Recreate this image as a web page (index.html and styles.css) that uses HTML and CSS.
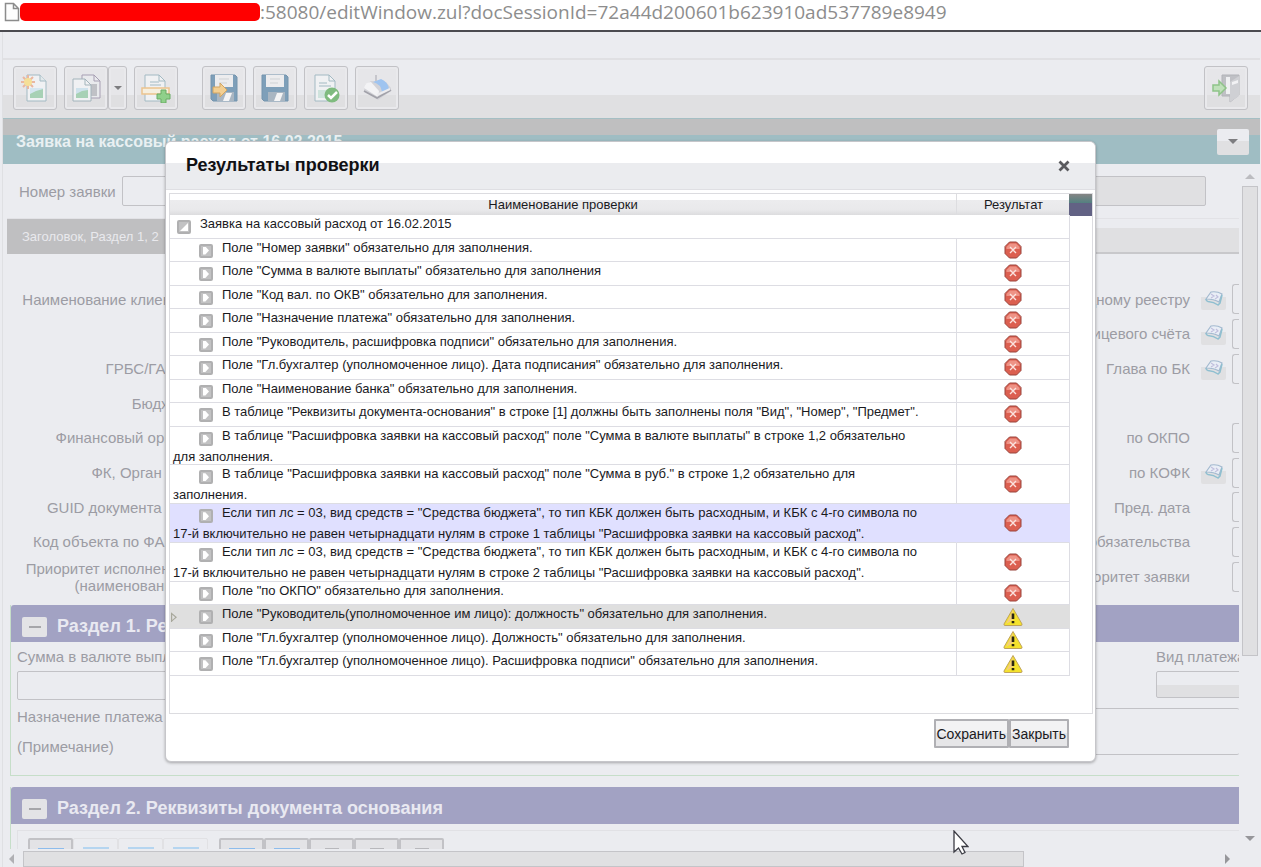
FILE: index.html
```html
<!DOCTYPE html>
<html lang="ru">
<head>
  <meta charset="UTF-8" />
  <meta name="viewport" content="width=device-width, initial-scale=1" />
  <title>Результаты проверки</title>
  <link rel="stylesheet" href="styles.css">
</head>
<body>
  <svg class="defs" aria-hidden="true">
    <symbol id="error" viewBox="0 0 18 18">
      <path d="M5.500 1h7L17 5.500v7L12.500 17h-7L1 12.500v-7z" fill="#dc5f50" stroke="#98453c"/>
      <path d="M6 2.500h6L15.500 6v2h-13V6z" fill="#ee9386"/>
      <path d="M6 6l6 6M12 6l-6 6" stroke="#fbe3df" stroke-width="1.400"/>
    </symbol>
    <symbol id="warn" viewBox="0 0 20 20">
      <path d="M10 1.500L19 17q.3 1.500-1 1.500H2Q.700 18.500 1 17z" fill="#f4e22c" stroke="#c0a35c"/>
      <path d="M10 3L3 17l7-4z" fill="#f3ce7c"/>
      <path d="M10 6.500v5.500M10 14v2.200" stroke="#2b2611" stroke-width="2.600"/>
    </symbol>
    <symbol id="book" viewBox="0 0 20 16">
      <path d="M2 9L7 2q6-1 11 2l-3 8q-5-3-13-3z" fill="#e9eef6" stroke="#a3b9cf" stroke-width="1.200"/>
      <path d="M2 9q0 2 2 2.500 6 .5 10 3.500l2-2 2-8" fill="none" stroke="#8fbfd0" stroke-width="1.500"/>
      <path d="M7 4l3 2-3 2M12 5l2 2-3 2" fill="none" stroke="#c0bfdd" stroke-width="1.200"/>
    </symbol>
    <symbol id="floppy" viewBox="0 0 30 30">
      <path d="M2 2h24l2 2v24H4l-2-2z" fill="#7e9fb9" stroke="#7594ad"/>
      <path d="M6 2h18v12H6z" fill="#ececee"/>
      <path d="M10 6h10M10 10h8" stroke="#cfd2d5"/>
      <path d="M8 19h17v9H8z" fill="#a9b6c2"/>
      <path d="M17 20h6l-3 8h-6z" fill="#f4f4f5"/>
    </symbol>
  </svg>

  <div class="address">
    <svg width="16" height="20" viewBox="0 0 16 20"><path d="M1.500 1.500h8l5 5v12h-13zM9.500 1.500v5h5" fill="#fdfdfd" stroke="#8c8c8c" stroke-width="1.500"/></svg>
    <span class="redacted"></span>
    <span>:58080/editWindow.zul?docSessionId=72a44d200601b623910ad537789e8949</span>
  </div>

  <div class="app">
    <div class="strip"></div>

    <div class="toolbar">
      <button class="tool" aria-label="Новый">
        <svg width="30" height="30" viewBox="0 0 30 30">
          <path d="M7 2h13l6 6v20H7z" fill="#f0f1f3" stroke="#a3bac3"/><path d="M20 2v6h6" fill="#e2e8eb" stroke="#a3bac3"/>
          <path d="M10 15h13v10H10z" fill="#d5e6f0"/><path d="M10 21l6-3 7-2v9H10z" fill="#a7d1b5"/>
          <path d="M8 2v14M1 9h14M3 4l10 10M13 4L3 14" stroke="#eab7a0" stroke-width="2"/><circle cx="8" cy="9" r="4" fill="#f5df98"/>
        </svg>
      </button>
      <div class="split">
        <button class="tool" aria-label="Копировать">
          <svg width="30" height="30" viewBox="0 0 30 30">
            <path d="M11 2h12l6 6v17H11z" fill="#e9eaed" stroke="#a79fb3"/><path d="M23 2v6h6" fill="none" stroke="#a79fb3"/><path d="M17 11h9v12h-9z" fill="#c0c1c6"/>
            <path d="M2 6h12l6 6v16H2z" fill="#f0f1f3" stroke="#a3b4bb"/><path d="M14 6v6h6" fill="none" stroke="#a3b4bb"/>
            <path d="M5 15h12v10H5z" fill="#cfe2ec"/><path d="M5 21l6-3 6-1v8H5z" fill="#a7d1b5"/>
          </svg>
        </button>
        <button class="tool tool-arrow" aria-label="Ещё"><span class="caret"></span></button>
      </div>
      <button class="tool" aria-label="Добавить строку">
        <svg width="30" height="30" viewBox="0 0 30 30">
          <path d="M4 2h14l6 6v20H4z" fill="#f0f1f3" stroke="#a3bac3"/><path d="M18 2v6h6M9 9h9M9 12h11" fill="none" stroke="#a3bac3"/>
          <path d="M1 15h27v6H1z" fill="#f6efdf" stroke="#ebc48f" stroke-width="1.500"/>
          <path d="M20 17h5v4h4v5h-4v4h-5v-4h-4v-5h4z" fill="#8fd08a" stroke="#68ac64"/>
        </svg>
      </button>
      <button class="tool tool-group" aria-label="Сохранить и выйти">
        <svg width="30" height="30"><use href="#floppy"/><path d="M4 14h7v-4l7 7-7 7v-4H4z" fill="#f3cf92" stroke="#d3a560"/></svg>
      </button>
      <button class="tool" aria-label="Сохранить документ"><svg width="30" height="30"><use href="#floppy"/></svg></button>
      <button class="tool" aria-label="Проверить">
        <svg width="30" height="30" viewBox="0 0 30 30">
          <path d="M4 2h14l6 6v20H4z" fill="#f0f1f3" stroke="#a3bac3"/><path d="M18 2v6h6M8 10h8M8 13h12" fill="none" stroke="#a3bac3"/>
          <path d="M7 17h14v8H7z" fill="#cfe3dd"/><circle cx="21" cy="22" r="7.500" fill="#7fbb7f"/><path d="M17 22l3 3 6-6" fill="none" stroke="#fff" stroke-width="2.500"/>
        </svg>
      </button>
      <button class="tool" aria-label="Печать">
        <svg width="30" height="30" viewBox="0 0 30 30">
          <path d="M2 18l1-6 6-4 15 1 5 6v3l-13 9z" fill="#d3d3d8"/>
          <path d="M2 15q1-6 7-6l8 9-1 6z" fill="#f3f3f5"/>
          <path d="M11 9l8-3q7 3 8 10l-7 3q-1-8-9-10z" fill="#9fc4f0"/>
          <path d="M14 2v6" stroke="#c6c6cc" stroke-width="2"/>
          <path d="M2 18l13 7 14-8" fill="none" stroke="#a2a2aa" stroke-width="1.800"/><path d="M15 22l13-6" stroke="#ececef" stroke-width="2"/>
        </svg>
      </button>
      <button class="tool tool-exit" aria-label="Выход">
        <svg width="30" height="30" viewBox="0 0 30 30">
          <path d="M11 2h17v20l-9 7v-6h-8z" fill="#bfc0c5" stroke="#b2b3b8"/><path d="M19 9l9-6v20l-9 6z" fill="#cfd0d4"/><path d="M15 4h4v17h-4z" fill="#eff0f2"/><path d="M21 9l6-2v3l-6 2z" fill="#f2f2f4"/>
          <path d="M2 12h6V8l7 7-7 7v-4H2z" fill="#bfe0ba" stroke="#8fc389" stroke-width="1.500"/>
        </svg>
      </button>
    </div>

    <div class="titlebar">
      <h1>Заявка на кассовый расход от 16.02.2015</h1>
      <button aria-label="Действия"><span class="caret"></span></button>
    </div>

    <div class="workspace">
      <div class="pane">
        <div class="number-row">
          <label for="number">Номер заявки</label>
          <input id="number" type="text">
          <input class="readonly" type="text" aria-label="Состояние" disabled>
        </div>
        <div class="tabs"><button class="tab">Заголовок, Раздел 1, 2</button><div class="tab-rest"></div></div>

        <div class="columns">
          <div class="labels">
            <span>Наименование клиента</span>
            <span></span>
            <span>ГРБС/ГАДБ</span>
            <span>Бюджет</span>
            <span>Финансовый орган</span>
            <span>ФК, Орган ФК</span>
            <span>GUID документа ФК</span>
            <span>Код объекта по ФАИП</span>
            <span>Приоритет исполнения<br>(наименование)</span>
          </div>
          <div class="fields">
            <div class="field"><label for="f1">по Сводному реестру</label><button class="pick" aria-label="Выбрать"><svg width="20" height="16"><use href="#book"/></svg></button><input id="f1" type="text"></div>
            <div class="field"><label for="f2">Номер лицевого счёта</label><button class="pick" aria-label="Выбрать"><svg width="20" height="16"><use href="#book"/></svg></button><input id="f2" type="text"></div>
            <div class="field"><label for="f3">Глава по БК</label><button class="pick" aria-label="Выбрать"><svg width="20" height="16"><use href="#book"/></svg></button><input id="f3" type="text"></div>
            <div class="field"></div>
            <div class="field"><label for="f4">по ОКПО</label><i></i><input id="f4" type="text"></div>
            <div class="field"><label for="f5">по КОФК</label><button class="pick" aria-label="Выбрать"><svg width="20" height="16"><use href="#book"/></svg></button><input id="f5" type="text"></div>
            <div class="field"><label for="f6">Пред. дата</label><i></i><input id="f6" type="text"></div>
            <div class="field"><label for="f7">Номер обязательства</label><i></i><input id="f7" type="text"></div>
            <div class="field"><label for="f8">Приоритет заявки</label><i></i><input id="f8" type="text"></div>
          </div>
        </div>

        <div class="section">
          <div class="section-head"><button aria-label="Свернуть"></button><h2>Раздел 1. Реквизиты</h2></div>
          <div class="payment">
            <div class="amount"><label for="sum">Сумма в валюте выплаты</label><input id="sum" type="text"></div>
            <div class="kind"><label for="kind">Вид платежа</label><select id="kind"><option></option></select></div>
          </div>
          <div class="purpose">
            <label for="purpose">Назначение платежа<br>(Примечание)</label>
            <textarea id="purpose"></textarea>
          </div>
        </div>

        <div class="section">
          <div class="section-head"><button aria-label="Свернуть"></button><h2>Раздел 2. Реквизиты документа основания</h2></div>
          <div class="section-tools">
            <button aria-label="Добавить"></button><button class="faint" aria-label="Изменить"></button><button class="faint" aria-label="Копировать строку"></button><button class="faint" aria-label="Удалить"></button>
            <button class="next" aria-label="Импорт"></button><button aria-label="Экспорт"></button><button class="gray" aria-label="Поиск"></button><button class="gray" aria-label="Фильтр"></button><button class="gray" aria-label="Настройка"></button>
          </div>
        </div>
      </div>
      <div class="vscroll"><span class="up"></span><div class="vthumb"></div><span class="down"></span></div>
    </div>
    <div class="hscroll"><span class="left"></span><div class="hthumb"></div><span class="right"></span></div>
  </div>

  <div class="dialog" role="dialog" aria-labelledby="dialog-title">
    <div class="dialog-head">
      <h2 id="dialog-title">Результаты проверки</h2>
      <button aria-label="Закрыть окно"><svg width="12" height="12" viewBox="0 0 12 12"><path d="M1.500 1.500l9 9M10.500 1.500l-9 9" stroke="#5a5a5e" stroke-width="2.800"/></svg></button>
    </div>
    <div class="tree">
      <div class="corner"></div>
      <table>
        <thead><tr><th>Наименование проверки</th><th class="result">Результат</th></tr></thead>
        <tbody>
          <tr class="root"><td colspan="2"><i class="node open"></i>Заявка на кассовый расход от 16.02.2015</td></tr>
          <tr><td><i class="node"></i>Поле "Номер заявки" обязательно для заполнения.</td><td><svg class="error"><use href="#error"/></svg></td></tr>
          <tr><td><i class="node"></i>Поле "Сумма в валюте выплаты" обязательно для заполнения</td><td><svg class="error"><use href="#error"/></svg></td></tr>
          <tr><td><i class="node"></i>Поле "Код вал. по ОКВ" обязательно для заполнения.</td><td><svg class="error"><use href="#error"/></svg></td></tr>
          <tr><td><i class="node"></i>Поле "Назначение платежа" обязательно для заполнения.</td><td><svg class="error"><use href="#error"/></svg></td></tr>
          <tr><td><i class="node"></i>Поле "Руководитель, расшифровка подписи" обязательно для заполнения.</td><td><svg class="error"><use href="#error"/></svg></td></tr>
          <tr><td><i class="node"></i>Поле "Гл.бухгалтер (уполномоченное лицо). Дата подписания" обязательно для заполнения.</td><td><svg class="error"><use href="#error"/></svg></td></tr>
          <tr><td><i class="node"></i>Поле "Наименование банка" обязательно для заполнения.</td><td><svg class="error"><use href="#error"/></svg></td></tr>
          <tr><td><i class="node"></i>В таблице "Реквизиты документа-основания" в строке [1] должны быть заполнены поля "Вид", "Номер", "Предмет".</td><td><svg class="error"><use href="#error"/></svg></td></tr>
          <tr><td><i class="node"></i>В таблице "Расшифровка заявки на кассовый расход" поле "Сумма в валюте выплаты" в строке 1,2 обязательно<br>для заполнения.</td><td><svg class="error"><use href="#error"/></svg></td></tr>
          <tr><td><i class="node"></i>В таблице "Расшифровка заявки на кассовый расход" поле "Сумма в руб." в строке 1,2 обязательно для<br>заполнения.</td><td><svg class="error"><use href="#error"/></svg></td></tr>
          <tr class="selected"><td><i class="node"></i>Если тип лс = 03, вид средств = "Средства бюджета", то тип КБК должен быть расходным, и КБК с 4-го символа по<br>17-й включительно не равен четырнадцати нулям в строке 1 таблицы "Расшифровка заявки на кассовый расход".</td><td><svg class="error"><use href="#error"/></svg></td></tr>
          <tr><td><i class="node"></i>Если тип лс = 03, вид средств = "Средства бюджета", то тип КБК должен быть расходным, и КБК с 4-го символа по<br>17-й включительно не равен четырнадцати нулям в строке 2 таблицы "Расшифровка заявки на кассовый расход".</td><td><svg class="error"><use href="#error"/></svg></td></tr>
          <tr><td><i class="node"></i>Поле "по ОКПО" обязательно для заполнения.</td><td><svg class="error"><use href="#error"/></svg></td></tr>
          <tr class="hovered"><td><i class="node"></i>Поле "Руководитель(уполномоченное им лицо): должность" обязательно для заполнения.</td><td><svg class="warn"><use href="#warn"/></svg></td></tr>
          <tr><td><i class="node"></i>Поле "Гл.бухгалтер (уполномоченное лицо). Должность" обязательно для заполнения.</td><td><svg class="warn"><use href="#warn"/></svg></td></tr>
          <tr><td><i class="node"></i>Поле "Гл.бухгалтер (уполномоченное лицо). Расшифровка подписи" обязательно для заполнения.</td><td><svg class="warn"><use href="#warn"/></svg></td></tr>
        </tbody>
      </table>
    </div>
    <div class="dialog-foot"><button>Сохранить</button><button>Закрыть</button></div>
  </div>

  <svg class="cursor" width="16" height="25" viewBox="0 0 16 25"><path d="M1 1v21l4.500-4 3.500 6 3-1.500-3-6h6z" fill="#fff" stroke="#3c3c44" stroke-width="1.300"/></svg>
</body>
</html>
```
FILE: styles.css
```css
* {
  box-sizing: border-box;
}

body {
  margin: 0;
  height: 100vh;
  display: flex;
  flex-direction: column;
  overflow: hidden;
  position: relative;
  background: #ebecf0;
  font-family: "Liberation Sans", Arial, sans-serif;
  font-size: 15px;
  color: #9c9ca4;
}

button, input, select, textarea {
  font: inherit;
  color: inherit;
  margin: 0;
  padding: 0;
  border: 1px solid #c2c2c6;
  border-radius: 2px;
  background: transparent;
}

h1, h2 {
  margin: 0;
}

.defs {
  position: absolute;
  width: 0;
  height: 0;
}

/* address line */
.address {
  flex: none;
  display: flex;
  align-items: center;
  height: 32px;
  padding: 0 4px 6px;
  background: #fff;
  border-bottom: 2px solid #4b4b50;
  font-family: "Open Sans", sans-serif;
  font-size: 19px;
  color: #8d8d8d;
  white-space: nowrap;
}

.redacted {
  width: 240px;
  height: 18px;
  border-radius: 5px;
  background: #f00;
}

.app {
  flex: 1;
  min-height: 0;
  display: flex;
  flex-direction: column;
  margin: 0 1px 0 2px;
  border-left: 1px solid #dfe0e3;
}

.strip {
  flex: none;
  height: 28px;
  border-bottom: 2px solid #e0e0e3;
}

.toolbar {
  flex: none;
  display: flex;
  align-items: flex-start;
  gap: 7px;
  height: 58px;
  padding: 6px 12px 0 10px;
  background: linear-gradient(#ebecf0 35px, #e0e0e2 35px);
}

.tool {
  width: 44px;
  height: 44px;
  display: flex;
  align-items: center;
  justify-content: center;
  border-radius: 3px;
  background: linear-gradient(#e6e6e9 28px, #dfdfe1 28px);
  box-shadow: inset 0 0 0 2px #e9e9ec;
}

.split {
  display: flex;
}

.tool-arrow {
  width: 19px;
}

.tool-group {
  margin-left: 17px;
}

.tool-exit {
  margin-left: auto;
}

.caret {
  border: 4px solid transparent;
  border-top: 4px solid #7d7d80;
  border-bottom: 0;
}

.titlebar {
  flex: none;
  display: flex;
  align-items: center;
  justify-content: space-between;
  height: 46px;
  padding: 0 11px 0 13px;
  border-top: 1px solid #a5bfc4;
  background: linear-gradient(#bfbfc0 16px, #9fbdc3 16px);
}

.titlebar h1 {
  font-size: 16px;
  color: #e9f0f2;
}

.titlebar button {
  width: 32px;
  height: 26px;
  display: flex;
  align-items: center;
  justify-content: center;
  border: 0;
  background: linear-gradient(#ebecf0 12px, #e0e0e2 12px);
}

.titlebar .caret {
  border-width: 5px;
  border-bottom: 0;
}

.workspace {
  flex: 1;
  min-height: 0;
  display: flex;
}

.pane {
  flex: 1;
  min-width: 0;
  overflow: hidden;
}

.number-row {
  display: flex;
  align-items: center;
  gap: 6px;
  height: 54px;
  padding: 0 33px 0 16px;
}

.number-row input {
  width: 200px;
  height: 30px;
}

.number-row .readonly {
  margin-left: auto;
  background: #e0e0e2;
}

.tabs {
  display: flex;
  align-items: flex-end;
  height: 36px;
  margin-left: 4px;
  border-top: 1px solid #e2e2e6;
}

.tab {
  width: 178px;
  height: 35px;
  padding-left: 15px;
  border: 0;
  border-radius: 0;
  background: #bfbfc1;
  color: #e9e9ed;
  font-size: 13px;
  text-align: left;
}

.tab-rest {
  flex: 1;
  height: 26px;
  border-bottom: 2px solid #c8c8cb;
  background: #e0e0e2;
}

/* form labels and fields */
.columns {
  display: flex;
  justify-content: space-between;
  height: 340px;
  margin-bottom: 11px;
  padding-top: 28px;
}

.labels, .fields {
  display: grid;
  grid-template-rows: repeat(9, 1fr);
}

.labels {
  width: 183px;
  text-align: right;
  line-height: 17px;
  white-space: nowrap;
}

.labels span {
  align-self: center;
}

.field {
  display: grid;
  grid-template-columns: 1fr 25px 7px;
  align-items: center;
  column-gap: 6px;
  text-align: right;
}

.field label {
  margin-right: 5px;
}

.field input {
  width: 7px;
  height: 30px;
  border-right: 0;
  border-radius: 3px 0 0 3px;
}

.pick {
  height: 22px;
  border: 0;
  background: linear-gradient(transparent 9px, #e0e0e2 9px);
}

.section {
  margin: 0 0 11px 7px;
  border: 1px solid #c6dec9;
  border-width: 0 0 1px 1px;
}

.section-head {
  display: flex;
  align-items: center;
  gap: 10px;
  height: 37px;
  padding: 6px 0 0 11px;
  border-radius: 3px 0 0 0;
  background: #a2a2c3;
}

.section-head h2 {
  font-size: 18px;
  color: #e9e9f1;
}

.section-head button {
  width: 25px;
  height: 20px;
  display: grid;
  place-items: center;
  border: 0;
  background: #e3e3e6;
}

.section-head button::before {
  content: "";
  width: 12px;
  height: 2px;
  background: #a6a6aa;
}

.payment {
  display: flex;
  justify-content: space-between;
  padding: 6px 0 0 6px;
}

.payment label {
  display: block;
  height: 23px;
  line-height: 17px;
}

.amount input {
  width: 200px;
  height: 29px;
}

.kind {
  width: 83px;
  overflow: hidden;
  white-space: nowrap;
}

.kind select {
  width: 120px;
  height: 27px;
  appearance: none;
  background: linear-gradient(#ebecf0 13px, #e0e0e2 13px);
}

.purpose {
  display: flex;
  gap: 20px;
  height: 75px;
  padding: 2px 0 0 6px;
  line-height: 30px;
}

.purpose textarea {
  flex: 1;
  height: 47px;
  margin-top: 6px;
  border-right: 0;
  resize: none;
}

.section-tools {
  display: flex;
  height: 40px;
  margin: 6px 0 0 6px;
  padding: 7px 10px;
  border: 1px solid #e1e1e5;
  border-right: 0;
}

.section-tools button {
  width: 45px;
  height: 32px;
  border-width: 2px;
  background: linear-gradient(#8dbcec, #8dbcec) center 8px / 26px 2px no-repeat, #e3e3e6;
}

.section-tools .faint {
  border: 1px solid #e1e1e4;
  background: linear-gradient(#b5d5f0, #b5d5f0) center 8px / 26px 2px no-repeat;
}

.section-tools .next {
  margin-left: 11px;
}

.section-tools .gray {
  background: linear-gradient(#b8b8bc, #b8b8bc) center 8px / 14px 2px no-repeat, #e3e3e6;
}

/* scroll bars */
.vscroll {
  flex: none;
  width: 21px;
  display: flex;
  flex-direction: column;
  align-items: center;
  padding: 10px 0 8px;
}

.vthumb {
  width: 16px;
  height: 470px;
  margin: 7px 0 auto;
  border: 1px solid #c4c4c8;
  background: #e0e0e2;
}

.hscroll {
  flex: none;
  height: 18px;
  display: flex;
  align-items: center;
  padding: 2px 30px 0 6px;
}

.hthumb {
  width: 82%;
  height: 16px;
  margin: 0 auto 0 9px;
  border: 1px solid #c4c4c8;
  background: #e0e0e2;
}

.up, .down, .left, .right {
  border: 5px solid transparent;
}

.up {
  border-top: 0;
  border-bottom-color: #bcbcc0;
}

.down {
  border-bottom: 0;
  border-top-color: #96969a;
}

.left {
  border-left: 0;
  border-right-color: #b0b0b4;
}

.right {
  border-right: 0;
  border-left-color: #96969a;
}

/* check results */
.dialog {
  position: absolute;
  top: 141px;
  left: 165px;
  right: 165px;
  padding-bottom: 13px;
  border: 1px solid #c6c6ca;
  border-radius: 6px;
  background: #fff;
  box-shadow: 0 1px 3px rgba(0, 0, 0, 0.3);
  color: #1a1a1e;
}

.dialog-head {
  display: flex;
  align-items: center;
  justify-content: space-between;
  height: 48px;
  padding: 0 24px 0 20px;
  border-radius: 6px 6px 0 0;
  border-bottom: 1px solid #dfdfe3;
  background: linear-gradient(#fff 21px, #ebecef 21px);
}

.dialog-head h2 {
  font-size: 18px;
  color: #111114;
}

.dialog-head button {
  width: 14px;
  height: 14px;
  display: grid;
  place-items: center;
  border: 0;
}

.tree {
  position: relative;
  height: 521px;
  margin: 3px 2px 5px 3px;
  padding-right: 22px;
  border: 1px solid #dcdce0;
  font-size: 13px;
}

.corner {
  position: absolute;
  top: 0;
  right: 0;
  width: 23px;
  height: 22px;
  background: linear-gradient(#858585, #538080 9px, #626284 9px);
}

.tree table {
  width: 100%;
  height: 482px;
  border-collapse: separate;
  border-spacing: 0;
  line-height: 15px;
}

.tree th {
  height: 21px;
  padding: 0;
  font-weight: normal;
  border-right: 1px solid #dddde0;
  background: linear-gradient(#fff 6px, #ececee 6px, #e9e9eb 16px, #dcdcde);
}

.tree .result {
  width: 113px;
  border-right: 0;
}

.tree td {
  position: relative;
  padding: 1px 3px 0;
  border-right: 1px solid #dddde3;
  border-bottom: 1px solid #dddde3;
  vertical-align: top;
  white-space: nowrap;
}

.tree td + td {
  padding: 0;
  text-align: center;
  vertical-align: middle;
}

.tree svg {
  display: block;
  margin: 0 auto;
}

.error {
  width: 18px;
  height: 18px;
}

.warn {
  width: 20px;
  height: 20px;
}

/* the node is taller than the text, so it sets the first line's height */
.node {
  display: inline-grid;
  place-items: center;
  vertical-align: top;
  width: 14px;
  height: 14px;
  margin: 4px 9px 3px 26px;
  border: 2px solid #b0b0b1;
  border-radius: 2px;
  background: #c2c2c3;
}

.node::before {
  content: "";
  width: 6px;
  height: 8px;
  background: #fff;
  clip-path: polygon(0 0, 40% 0, 100% 50%, 40% 100%, 0 100%);
}

.node.open {
  margin-left: 4px;
}

.node.open::before {
  width: 8px;
  clip-path: polygon(100% 0, 100% 100%, 0 100%);
}

.selected td {
  background: #e0e0ff;
  border-right-color: #e0e0ff;
}

.hovered td {
  background: #dfdfdf;
  border-right-color: #dfdfdf;
}

.hovered td:first-child::before {
  content: "";
  position: absolute;
  left: 1px;
  top: 7px;
  width: 6px;
  height: 10px;
  background: #a8a89c;
  clip-path: polygon(0 0, 100% 50%, 0 100%, 0 80%, 20% 76%, 70% 50%, 20% 24%, 20% 100%, 0 100%);
}

.dialog-foot {
  display: flex;
  justify-content: flex-end;
  padding-right: 26px;
}

.dialog-foot button {
  height: 29px;
  padding: 0 1px;
  border: 2px solid #b0b0b4;
  border-radius: 1px;
  background: linear-gradient(#f3f3f4 50%, #e6e6e8 50%);
  font-size: 14px;
}

.cursor {
  position: absolute;
  left: 953px;
  top: 830px;
}
```
